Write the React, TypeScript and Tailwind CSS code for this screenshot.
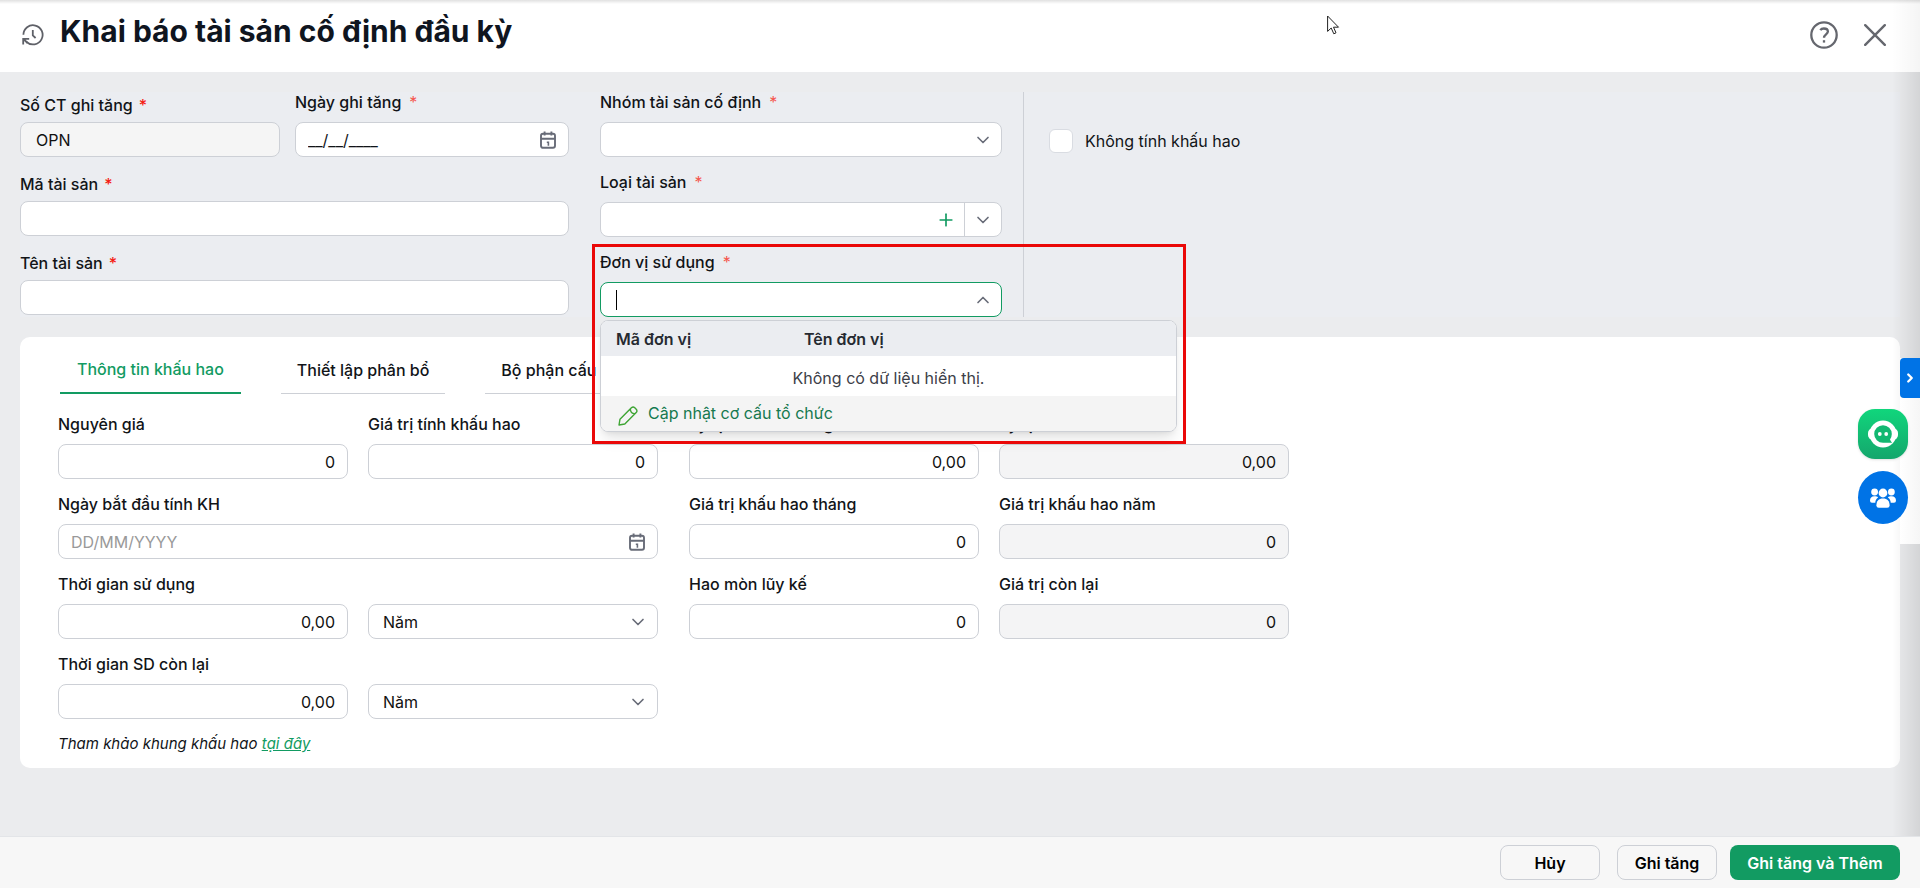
import type { ReactNode } from "react";
import { ChevronDown, ChevronRight, ChevronUp, Plus } from "lucide-react";

const box = "h-[35px] w-full rounded-lg border border-[#cdd0d6] px-3 text-base text-[#111] outline-none";

function Label({ id, text, required, light }: { id: string; text: string; required?: boolean; light?: boolean }) {
  return (
    <label htmlFor={id} className="block text-base leading-5 font-medium whitespace-nowrap">
      {text}
      {required && <span className={light ? "ml-2 font-normal text-[#f5564d]" : "ml-1.5 text-[#f5190f]"}>*</span>}
    </label>
  );
}

function CalendarIcon() {
  return (
    <svg viewBox="0 0 16 18" className="h-[18px] w-4 shrink-0 text-[#686c78]" fill="none" stroke="currentColor" strokeWidth="1.9">
      <rect x="1" y="2.8" width="14" height="14" rx="2" />
      <path d="M1 7.8h14M4.6 0.4v4M11.4 0.4v4" />
      <path d="M6.8 11.2h1.6v3.6" strokeWidth="1.6" />
    </svg>
  );
}

function HistoryIcon() {
  return (
    <svg viewBox="0 0 22 22" className="size-[22px] text-[#5f6168]" fill="none" stroke="currentColor" strokeWidth="1.8">
      <path d="M1.4 10.8A9.6 9.6 0 1 1 4.6 18" />
      <path d="M1.2 20.5v-5.7h6M1.5 15l4 4" />
      <path d="M10.8 6v5.4l2.8 2.6" />
    </svg>
  );
}

function NumberField({ id, label, value, locked }: { id: string; label: string; value: string; locked?: boolean }) {
  return (
    <div className="flex flex-col gap-2.5">
      <Label id={id} text={label} />
      <input id={id} defaultValue={value} readOnly={locked} className={`${box} text-right ${locked ? "bg-[#f4f4f5]" : "bg-white"}`} />
    </div>
  );
}

function UnitSelect({ label }: { label: string }) {
  return (
    <div className="relative self-end">
      <select aria-label={label} className={`${box} appearance-none bg-white px-3.5`}>
        <option>Năm</option>
        <option>Tháng</option>
      </select>
      <ChevronDown className="pointer-events-none absolute top-2 right-2.5 size-5 text-[#686c78]" />
    </div>
  );
}

function Combo({ id, label, children }: { id: string; label: string; children: ReactNode }) {
  return (
    <div className="relative flex flex-col gap-2.5">
      <Label id={id} text={label} required light />
      {children}
    </div>
  );
}

export default function App() {
  return (
    <div className="relative flex min-h-screen flex-col overflow-hidden bg-[#ebecee] font-['Inter',sans-serif] text-[#111418]">
      {/* Header */}
      <header className="flex h-[72px] items-center bg-white px-[22px] pb-0.5">
        <HistoryIcon />
        <h1 className="ml-4 pb-2 text-[30px] leading-9 font-bold text-[#0f151f]">Khai báo tài sản cố định đầu kỳ</h1>
        <div className="mr-3 ml-auto flex items-center gap-[26px] text-[#65676e]">
          <button type="button" aria-label="Trợ giúp">
            <svg viewBox="0 0 28 28" className="size-7" fill="none" stroke="currentColor" strokeWidth="2.3">
              <circle cx="14" cy="14" r="12.7" />
              <path d="M10.3 9.2c.8-1.2 2-1.7 3.6-1.7 2.3 0 4 1.2 4 3.1 0 2.7-3.9 3-3.9 6.2" />
              <path d="M14 19.2v2.4" />
            </svg>
          </button>
          <button type="button" aria-label="Đóng">
            <svg viewBox="0 0 22 22" className="size-[22px]" fill="none" stroke="currentColor" strokeWidth="2.4" strokeLinecap="round">
              <path d="M1.2 1.2l19.6 19.6M20.8 1.2l-19.6 19.6" />
            </svg>
          </button>
        </div>
      </header>

      <main className="flex-1 px-5 pt-5 pb-[68px]">
        {/* General information */}
        <section className="flex bg-[#ebedf1]">
          <div className="grid w-full max-w-[1004px] grid-cols-[549fr_402fr] gap-x-[31px] border-r border-[#cdd0d6] pr-[21px]">
            <div className="flex flex-col gap-3.5">
              <div className="grid grid-cols-[260fr_274fr] items-end gap-x-[15px]">
                <div className="flex flex-col gap-[7px]">
                  <Label id="voucher" text="Số CT ghi tăng" required />
                  <input id="voucher" defaultValue="OPN" readOnly className={`${box} bg-[#f5f5f5] px-[15px]`} />
                </div>
                <div className="flex flex-col gap-2.5">
                  <Label id="date" text="Ngày ghi tăng" required light />
                  <div className="flex h-[35px] items-center rounded-lg border border-[#cdd0d6] bg-white px-3">
                    <input id="date" defaultValue="__/__/____" className="w-full min-w-0 text-base outline-none" />
                    <CalendarIcon />
                  </div>
                </div>
              </div>
              <div className="flex flex-col gap-[7px] pt-[3px]">
                <Label id="code" text="Mã tài sản" required />
                <input id="code" className={`${box} bg-white`} />
              </div>
              <div className="flex flex-col gap-[7px] pt-[3px]">
                <Label id="name" text="Tên tài sản" required />
                <input id="name" className={`${box} bg-white`} />
              </div>
            </div>

            <div className="flex flex-col gap-[15px]">
              <Combo id="group" label="Nhóm tài sản cố định">
                <div className="flex h-[35px] items-center rounded-lg border border-[#cdd0d6] bg-white px-2">
                  <input id="group" className="w-full min-w-0 outline-none" />
                  <ChevronDown className="size-5 shrink-0 text-[#686c78]" />
                </div>
              </Combo>
              <Combo id="type" label="Loại tài sản">
                <div className="flex h-[35px] items-center rounded-lg border border-[#cdd0d6] bg-white">
                  <input id="type" className="w-full min-w-0 outline-none" />
                  <button type="button" aria-label="Thêm loại tài sản" className="px-2 text-[#129b62]">
                    <Plus className="size-5" />
                  </button>
                  <button type="button" aria-label="Chọn loại tài sản" className="h-full border-l border-[#cdd0d6] px-2 text-[#686c78]">
                    <ChevronDown className="size-5" />
                  </button>
                </div>
              </Combo>
              <Combo id="unit" label="Đơn vị sử dụng">
                <div className="flex h-[35px] items-center rounded-lg border border-[#129b62] bg-white pr-2 pl-[15px]">
                  <span className="h-5 w-px shrink-0 bg-black" />
                  <input id="unit" className="w-full min-w-0 outline-none" />
                  <ChevronUp className="size-5 shrink-0 text-[#686c78]" />
                </div>
                {/* Unit picker */}
                <div className="absolute top-[68px] left-0 z-20 w-[577px] overflow-hidden rounded-lg border border-[#cdd0d6] bg-white shadow-lg">
                  <table className="w-full table-fixed text-left text-base">
                    <thead>
                      <tr className="h-[35px] bg-[#ebedf1]">
                        <th className="w-[188px] pl-[15px] font-semibold text-[#262a31]">Mã đơn vị</th>
                        <th className="pl-[15px] font-semibold text-[#262a31]">Tên đơn vị</th>
                      </tr>
                    </thead>
                    <tbody>
                      <tr className="h-10">
                        <td colSpan={2} className="pt-1 text-center text-[#3c4048]">Không có dữ liệu hiển thị.</td>
                      </tr>
                    </tbody>
                  </table>
                  <button type="button" className="flex h-[35px] w-full items-center gap-2.5 bg-[#f4f4f4] pl-[17px] text-[#15794f]">
                    <svg viewBox="0 0 20 20" className="mt-1 size-5 text-[#3fa535]" fill="none" stroke="currentColor" strokeWidth="1.4" strokeLinejoin="round">
                      <path d="M1 19l1-5.8L13.4 1.8a2.6 2.6 0 0 1 3.4 0l1.4 1.4a2.6 2.6 0 0 1 0 3.4L6.8 18zM12.4 3.2c0 2.6 1.8 4.4 4.4 4.4" />
                    </svg>
                    <span className="pb-0.5 leading-6">Cập nhật cơ cấu tổ chức</span>
                  </button>
                </div>
                <div className="pointer-events-none absolute -top-2 -left-2 z-30 h-[200px] w-[594px] border-3 border-[#ea0808]" />
              </Combo>
            </div>
          </div>
          <label className="flex items-center gap-3 self-start pt-[37px] pl-[25px] text-base leading-6 whitespace-nowrap">
            <input type="checkbox" className="size-6 appearance-none rounded-md border border-[#d9dce2] bg-white" />
            Không tính khấu hao
          </label>
        </section>

        {/* Depreciation */}
        <section className="mt-5 rounded-[10px] bg-white px-[38px] pb-3">
          <nav className="flex gap-10 pt-3 pl-0.5 font-medium">
            <button type="button" className="h-[45px] border-b-2 border-[#129b62] px-[17px] pb-1 text-[#129b62]">Thông tin khấu hao</button>
            <button type="button" className="h-[45px] border-b border-[#cdd0d6] px-4 pb-0.5">Thiết lập phân bổ</button>
            <button type="button" className="h-[45px] border-b border-[#cdd0d6] px-4 pb-0.5">Bộ phận cấu thành</button>
          </nav>
          <div className="mt-5 grid w-full max-w-[1231px] grid-cols-2 items-start gap-x-[31px]">
            <div className="grid grid-cols-2 gap-x-5 gap-y-[15px]">
              <NumberField id="cost" label="Nguyên giá" value="0" />
              <NumberField id="base" label="Giá trị tính khấu hao" value="0" />
              <div className="col-span-2 flex flex-col gap-2.5">
                <Label id="start" text="Ngày bắt đầu tính KH" />
                <div className="flex h-[35px] items-center rounded-lg border border-[#cdd0d6] bg-white px-3">
                  <input id="start" placeholder="DD/MM/YYYY" className="w-full min-w-0 text-base outline-none placeholder:text-[#999]" />
                  <CalendarIcon />
                </div>
              </div>
              <NumberField id="life" label="Thời gian sử dụng" value="0,00" />
              <UnitSelect label="Đơn vị thời gian sử dụng" />
              <NumberField id="remain" label="Thời gian SD còn lại" value="0,00" />
              <UnitSelect label="Đơn vị thời gian còn lại" />
            </div>
            <div className="grid grid-cols-2 gap-x-5 gap-y-[15px]">
              <NumberField id="rate-month" label="Tỷ lệ tính KH tháng" value="0,00" />
              <NumberField id="rate-year" label="Tỷ lệ tính KH năm" value="0,00" locked />
              <NumberField id="value-month" label="Giá trị khấu hao tháng" value="0" />
              <NumberField id="value-year" label="Giá trị khấu hao năm" value="0" locked />
              <NumberField id="accrued" label="Hao mòn lũy kế" value="0" />
              <NumberField id="left" label="Giá trị còn lại" value="0" locked />
            </div>
          </div>
          <p className="mt-[13px] text-[15px] leading-6 italic">
            Tham khảo khung khấu hao <a href="#" className="text-[#129b62] underline">tại đây</a>
          </p>
        </section>
      </main>

      <footer className="flex h-[52px] items-center justify-end border-t border-[#e3e5e8] bg-[#f7f7f7] px-5 font-semibold text-black">
        <button type="button" className="h-[35px] w-[100px] rounded-lg border border-[#cdd0d6]">Hủy</button>
        <button type="button" className="ml-[17px] h-[35px] w-[100px] rounded-lg border border-[#cdd0d6]">Ghi tăng</button>
        <button type="button" className="ml-[13px] h-[35px] w-[170px] rounded-lg bg-[#129b62] text-white">Ghi tăng và Thêm</button>
      </footer>

      {/* Window edges */}
      <div className="pointer-events-none absolute inset-x-0 top-0 h-1 bg-linear-to-b from-black/12 to-transparent" />
      <div className="pointer-events-none absolute top-0 right-0 h-[72px] w-7 bg-linear-to-l from-black/4 to-transparent" />
      <div className="pointer-events-none absolute top-[72px] right-0 bottom-[52px] w-7 bg-linear-to-l from-black/10 to-transparent" />

      {/* Floating assistants */}
      <div className="absolute top-[358px] right-0 z-10 h-[186px] w-5 bg-linear-to-l from-[#f6f6f6] to-white">
        <button type="button" aria-label="Mở rộng" className="flex h-10 w-5 items-center justify-center rounded-l bg-[#0073e6] text-white">
          <ChevronRight className="size-3.5" strokeWidth={4} />
        </button>
      </div>
      <div className="absolute top-[409px] right-3 z-10 flex flex-col gap-3">
        <button type="button" aria-label="Trợ lý" className="flex size-[50px] items-center justify-center rounded-[17px] bg-linear-to-b from-[#10d67c] to-[#14a66c] shadow">
          <svg viewBox="0 0 32 28" className="h-7 w-8">
            <rect x="1" y="8.5" width="30" height="11" rx="4.5" fill="white" />
            <circle cx="16" cy="14" r="13.5" fill="white" />
            <path d="M24.8 14A8.8 8.8 0 1 0 16 22.8h9.2a8 8 0 0 1-2.2-3.4 9 9 0 0 0 1.8-5.4z" fill="#12b871" />
            <circle cx="12.8" cy="14" r="1.9" fill="white" />
            <circle cx="19.2" cy="14" r="1.9" fill="white" />
          </svg>
        </button>
        <button type="button" aria-label="Cộng đồng" className="flex h-[53px] w-[50px] items-center justify-center rounded-[50%] bg-[#0073e6]">
          <svg viewBox="0 0 26 20" className="h-5 w-[26px]" fill="white">
            <circle cx="13" cy="5" r="4.4" />
            <circle cx="4.6" cy="4" r="3.4" />
            <circle cx="21.4" cy="4" r="3.4" />
            <path d="M6.4 17.4c0-4.4 2.4-7 6.6-7s6.6 2.6 6.6 7q0 2.4-2.4 2.4H8.8q-2.4 0-2.4-2.4z" />
            <path d="M5.3 14.8H2q-2 0-2-2c0-3 1.5-4.5 4.4-4.5 1.8 0 2.9.3 3.7 1.1-1.8 1.3-2.8 3.1-2.8 5.4zM20.7 14.8H24q2 0 2-2c0-3-1.5-4.5-4.4-4.5-1.8 0-2.9.3-3.7 1.1 1.8 1.3 2.8 3.1 2.8 5.4z" />
          </svg>
        </button>
      </div>

      {/* Pointer */}
      <svg viewBox="0 0 13 20" className="pointer-events-none absolute top-[15px] left-[1327px] h-5 w-[13px]" fill="white" stroke="#222" strokeWidth="1">
        <path d="M.6 1v15.4l3.6-3.4 2.6 5.8 2.2-1-2.5-5.6h5z" />
      </svg>
    </div>
  );
}
